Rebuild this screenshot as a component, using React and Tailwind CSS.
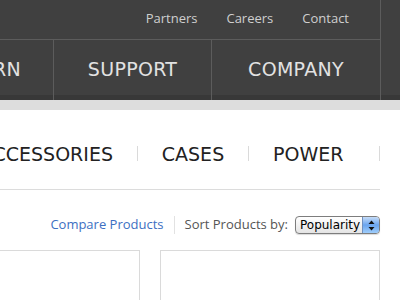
export default function App() {
  const nav = { fontFamily: '"DejaVu Sans", sans-serif' };
  const ui = { fontFamily: '"Open Sans", "DejaVu Sans", sans-serif' };
  return (
    <div className="w-[400px] h-[300px] overflow-hidden bg-white relative">
      {/* dark header */}
      <div className="bg-[#404040] h-[100px] shadow-[inset_0_-5px_0_rgba(0,0,0,0.12)] flex">
        <div className="w-[381px] shrink-0 flex flex-col border-r border-[#5c5c5c]">
          <div className="h-[40px] border-b border-[#5c5c5c] flex items-center justify-end pr-[31px] gap-[29px] text-[13px] text-[#cfcfcf] pb-[2px]" style={ui}>
            <span>Partners</span>
            <span>Careers</span>
            <span>Contact</span>
          </div>
          <div className="flex flex-1 text-[19px] text-[#e2e2e2] tracking-[0.3px]" style={nav}>
            <div className="w-[53px] shrink-0 overflow-hidden flex justify-end items-center pr-[32px] pb-[2px] whitespace-nowrap">
              <span className="shrink-0">LEARN</span>
            </div>
            <div className="w-[158px] shrink-0 border-l border-[#5c5c5c] flex justify-center items-center pb-[2px]">SUPPORT</div>
            <div className="flex-1 border-l border-[#5c5c5c] flex justify-center items-center pb-[2px]">COMPANY</div>
          </div>
        </div>
      </div>
      <div className="h-[10px] bg-[#dddddd]" />

      {/* category nav */}
      <div className="w-[380px] h-[80px] border-b border-[#dcdcdc] flex items-start pt-[33px] text-[19px] text-[#222]" style={nav}>
        <div className="w-[137px] shrink-0 overflow-hidden flex justify-end pr-[24px] whitespace-nowrap h-[22px] items-center">
          <span className="shrink-0">ACCESSORIES</span>
        </div>
        <div className="w-px h-[15px] bg-[#dadada] mt-[3px] shrink-0" />
        <div className="w-[110px] shrink-0 flex justify-center h-[22px] items-center">CASES</div>
        <div className="w-px h-[15px] bg-[#dadada] mt-[3px] shrink-0" />
        <div className="flex-1 flex justify-start pl-[24px] h-[22px] items-center">POWER</div>
        <div className="w-px h-[15px] bg-[#dadada] mt-[3px] shrink-0" />
      </div>

      {/* toolbar */}
      <div className="w-[380px] flex justify-end items-center mt-[26px] h-[18px] text-[13px]" style={ui}>
        <span className="text-[#3d6fc2]">Compare Products</span>
        <div className="w-px h-[18px] bg-[#e2e2e2] mx-[10px]" />
        <span className="text-[#555]">Sort Products by:</span>
        <div className="ml-[7px] w-[85px] h-[18px] rounded-[4px] border border-[#7d7d7d] bg-gradient-to-b from-white to-[#e4e4e4] flex overflow-hidden shadow-[0_1px_1px_rgba(0,0,0,0.15)]">
          <span className="flex-1 pl-[4px] text-[12px] leading-[16px] text-black" style={{ fontFamily: '"DejaVu Sans", sans-serif' }}>Popularity</span>
          <div className="w-[17px] border-l border-[#6f8fbf] bg-gradient-to-b from-[#c6dcf7] via-[#6aa4ee] to-[#9fcdfa] flex items-center justify-center">
            <svg width="7" height="11" viewBox="0 0 7 11">
              <path d="M3.5 0.5 L6.5 4 L0.5 4 Z" fill="#111" />
              <path d="M3.5 10.5 L6.5 7 L0.5 7 Z" fill="#111" />
            </svg>
          </div>
        </div>
      </div>

      {/* product boxes */}
      <div className="flex mt-[16px] w-[380px]">
        <div className="w-[140px] h-[80px] border-r border-t border-[#dadada] shrink-0" />
        <div className="w-[20px] shrink-0" />
        <div className="flex-1 h-[80px] border border-[#dadada]" />
      </div>
    </div>
  );
}
